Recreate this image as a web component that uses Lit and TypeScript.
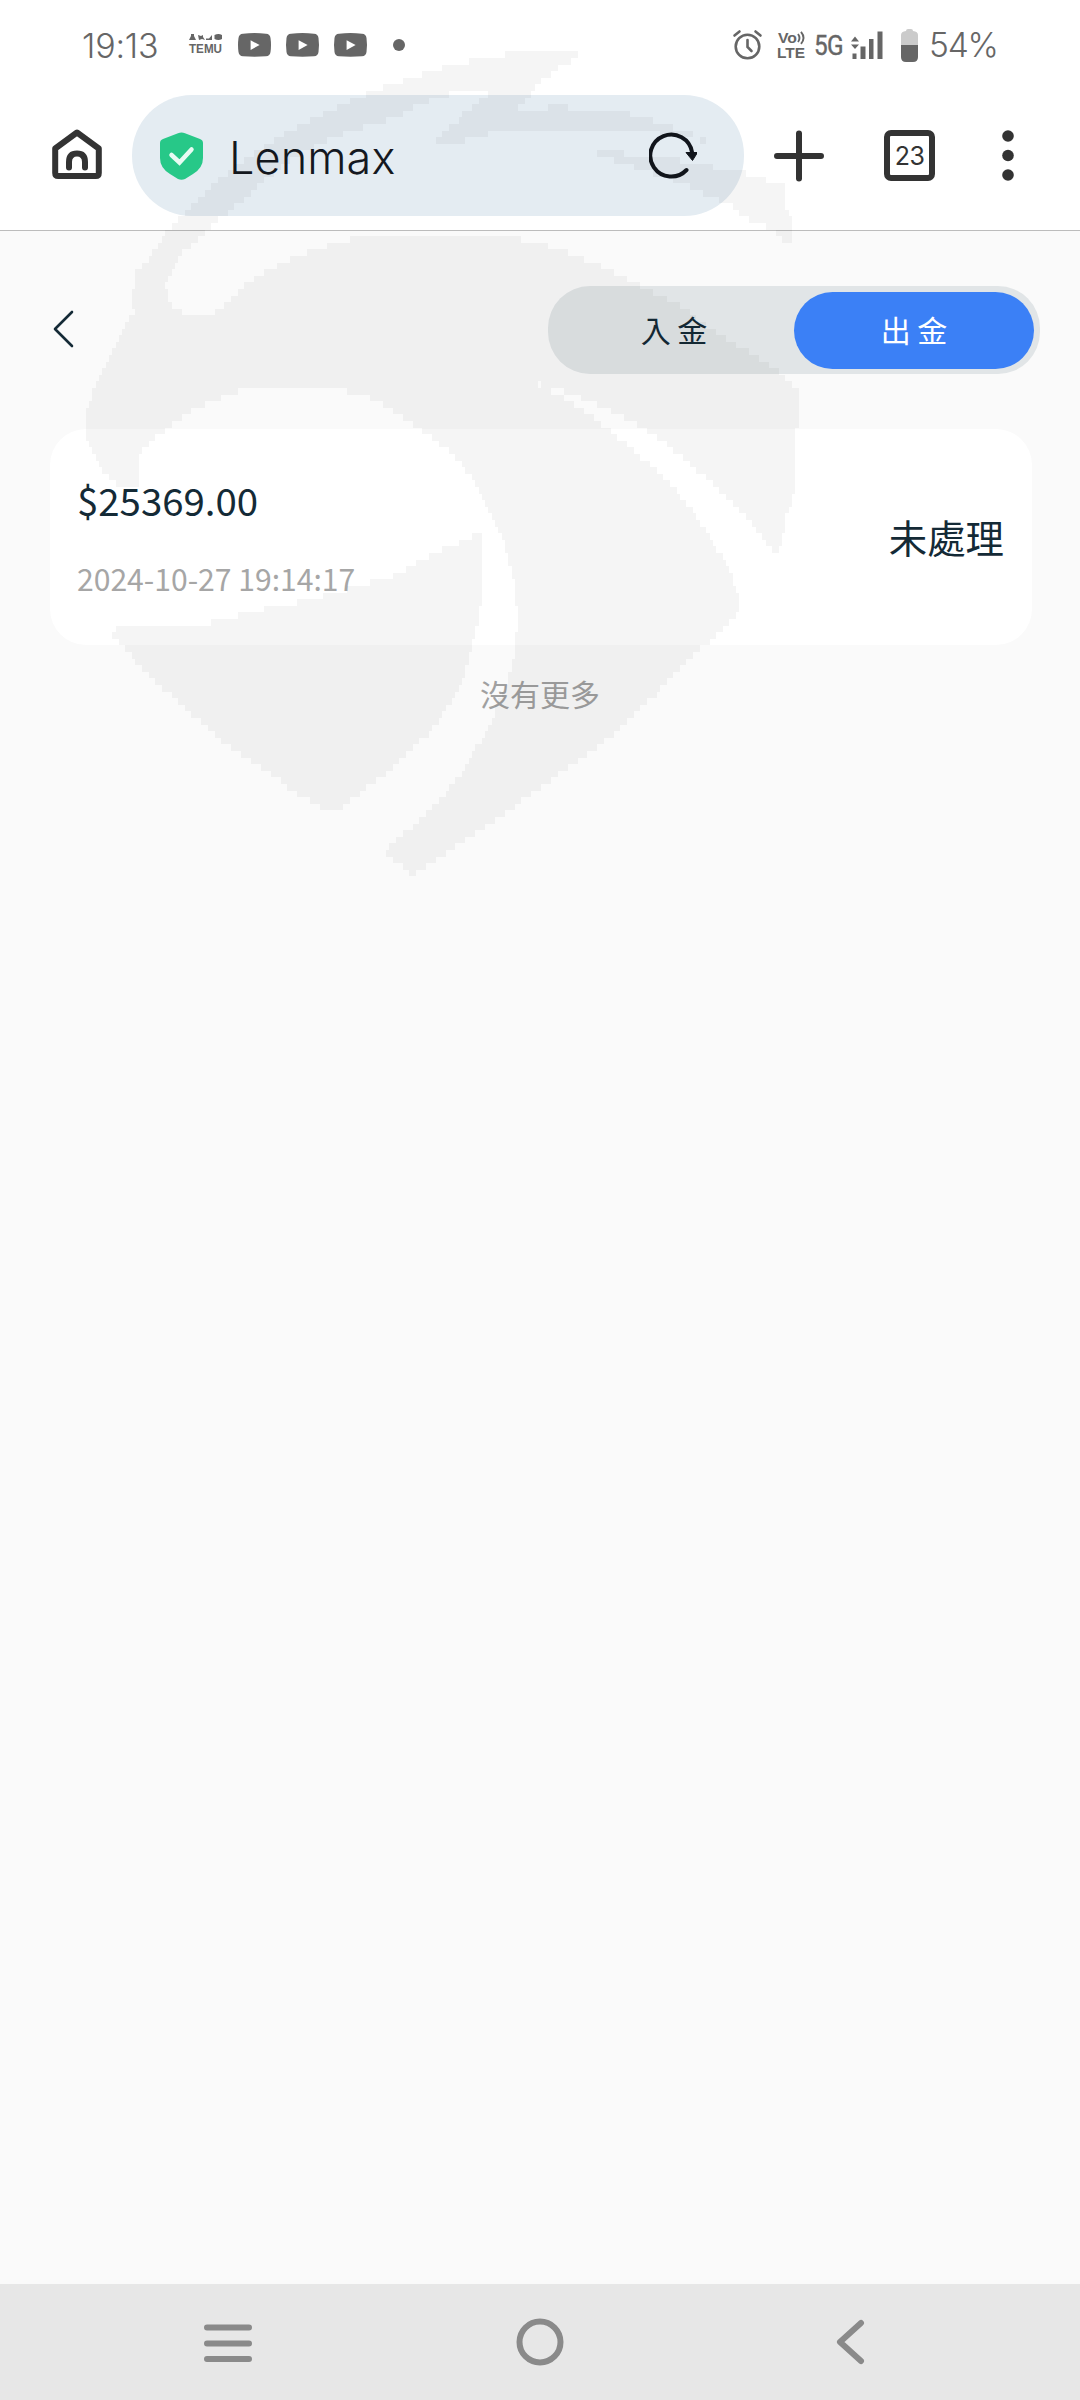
import { LitElement, html, css, svg } from "lit";
import { customElement, property } from "lit/decorators.js";

type Pt = [number, number];

// Emblem outlines in page pixels.
const HELMET: Pt[] = [
  [583, 51], [527, 51], [483, 58], [450, 65], [404, 80], [358, 97], [307, 122], [278, 138], [249, 156], [221, 178],
  [186, 213], [163, 236], [147, 262], [135, 274], [132, 302], [134, 312], [120, 335], [108, 357], [96, 385], [86, 415],
  [86, 435], [93, 455], [103, 471], [117, 485], [137, 484], [137, 457], [155, 438], [175, 422], [203, 405], [244, 389],
  [290, 386], [336, 388], [370, 398], [400, 415], [427, 433], [462, 463], [485, 502], [503, 540], [513, 575], [517, 610],
  [516, 646], [506, 685], [488, 729], [458, 779], [422, 818], [383, 851], [413, 876], [494, 821], [611, 737], [655, 695],
  [691, 657], [720, 632], [737, 613], [739, 600], [732, 575], [712, 540], [687, 503], [653, 467], [613, 433], [583, 410],
  [563, 397], [537, 384], [557, 388], [577, 396], [610, 410], [647, 430], [687, 460], [720, 492], [753, 525], [775, 555],
  [782, 540], [788, 510], [794, 495], [795, 437], [799, 420], [799, 390], [780, 373], [755, 356], [720, 335], [680, 306],
  [640, 285], [605, 268], [559, 249], [508, 236], [427, 233], [390, 233], [347, 240], [305, 253], [290, 260], [262, 273],
  [244, 285], [230, 300], [212, 314], [183, 314], [169, 302], [165, 285], [172, 268], [185, 250], [198, 240], [207, 230],
  [222, 216], [238, 205], [258, 185], [290, 160], [320, 143], [355, 130], [396, 118], [420, 103], [448, 97], [448, 92],
  [490, 92], [480, 100], [467, 110], [455, 123], [435, 141], [447, 145], [473, 138], [497, 132], [600, 131], [650, 132],
  [680, 137], [712, 143], [690, 133], [657, 122], [623, 112], [560, 107], [517, 109], [528, 97], [535, 87], [547, 77],
  [557, 68], [572, 60],
];
const PLUME: Pt[] = [
  [592, 152], [615, 152], [650, 158], [677, 160], [703, 166], [727, 168], [753, 175], [785, 187], [787, 207], [793, 225],
  [793, 240], [783, 240], [773, 230], [750, 220], [727, 203], [710, 197], [683, 183], [660, 175], [633, 167], [613, 160],
];
const JAW: Pt[] = [
  [482, 532], [483, 585], [476, 629], [462, 685], [433, 729], [393, 768], [333, 814], [301, 796], [221, 740], [152, 679],
  [112, 635], [117, 626], [203, 624], [261, 610], [310, 600], [358, 586], [395, 575], [427, 557],
];

const CELL = 6.6;
const ROW_OFFSET = 5.2;

// Converts an outline to one stepped path on a coarse cell grid.
function stepped(points: Pt[]): string {
  const ys = points.map((p) => p[1]);
  const first = Math.floor((Math.min(...ys) - ROW_OFFSET) / CELL);
  const last = Math.ceil((Math.max(...ys) - ROW_OFFSET) / CELL);
  let d = "";
  for (let r = first; r <= last; r++) {
    const top = r * CELL + ROW_OFFSET;
    const y = top + CELL / 2;
    const xs: number[] = [];
    points.forEach(([x1, y1], i) => {
      const [x2, y2] = points[(i + 1) % points.length];
      if (y1 <= y !== y2 <= y) xs.push(x1 + ((y - y1) * (x2 - x1)) / (y2 - y1));
    });
    xs.sort((a, b) => a - b);
    for (let i = 0; i + 1 < xs.length; i += 2) {
      const a = Math.round(xs[i] / 3.3) * 3.3;
      const b = Math.round(xs[i + 1] / 3.3) * 3.3;
      if (b > a) d += `M${a.toFixed(1)} ${top.toFixed(1)}H${b.toFixed(1)}v${CELL}H${a.toFixed(1)}z`;
    }
  }
  return d;
}

const EMBLEM = [HELMET, PLUME, JAW].map(stepped).join("");

@customElement("status-bar")
class StatusBar extends LitElement {
  static styles = css`
    :host { display: flex; justify-content: space-between; height: 95px; padding: 0 82px 0 82px; box-sizing: border-box;
      color: #666; font-family: Inter, Roboto, sans-serif; font-weight: 300; }
    .side { display: flex; height: 90px; align-items: center; }
    .time { font-size: 34px; letter-spacing: -0.2px; width: 107px; white-space: nowrap; }
    .pct { font-size: 33.500px; letter-spacing: -1.2px; width: 69px; margin-left: 11px; white-space: nowrap; }
    svg { display: block; fill: #666; overflow: visible; }
    .yt { margin-left: 15px; }
    .dot { margin-left: 26px; }
    .volte { margin-left: 15px; }
    .net { margin-left: 8px; font: 400 28px Roboto, sans-serif; width: 31px; letter-spacing: -0.8px; -webkit-text-stroke: 0.4px #666; transform: scaleX(0.87); transform-origin: 0 50%; }
    .signal { margin-left: 6px; }
    .battery { margin-left: 18px; }
    text { font-family: "Liberation Sans", sans-serif; font-weight: 700; }
  `;
  render() {
    const yt = html`<svg class="yt" width="33" height="24" viewBox="0 0 33 24"><path fill-rule="evenodd" d="M5 .8Q16.500-.8 28 .8 32 1 32.500 5q1 7 0 14-.5 4-4.500 4.300-11.500.8-23 0Q1 23 .5 19-.5 12 .5 5 1 1 5 .8M12.600 7.300v9.600l9-4.800z"/></svg>`;
    return html`
      <div class="side">
        <span class="time">19:13</span>
        <svg width="34" height="22" viewBox="0 0 34 22">
          <path d="M2 0h3v2l2 4H0l2-4zM9 1l3 1 2-1v2l2 3-3-1-3 1zM17 4.500h3l3-3.500v5h-6zM25.500 1q4-2 7.500 0v4q-3.500 2-7.500 0z"/>
          <text x="0" y="19" font-size="12" textLength="33" lengthAdjust="spacingAndGlyphs">TEMU</text>
        </svg>
        ${yt}${yt}${yt}
        <svg class="dot" width="12" height="12"><circle cx="6" cy="6" r="6"/></svg>
      </div>
      <div class="side">
        <svg width="29" height="30" viewBox="0 0 29 30">
          <g fill="none" stroke="#666" stroke-width="2.600" stroke-linecap="round">
            <circle cx="14.500" cy="16.500" r="11.800"/><path d="M14.500 10v7l4 4M1.500 5.500l5-4M27.500 5.500l-5-4"/>
          </g>
        </svg>
        <svg class="volte" width="29" height="28" viewBox="0 0 29 28">
          <text x="1" y="12" font-size="14" textLength="19" lengthAdjust="spacingAndGlyphs">Vo</text>
          <path d="M21 3q3 4 0 8M24 .8q5 6 0 12" fill="none" stroke="#666" stroke-width="1.900"/>
          <text x="0" y="27" font-size="15" textLength="28" lengthAdjust="spacingAndGlyphs">LTE</text>
        </svg>
        <span class="net">5G</span>
        <svg class="signal" width="32" height="28" viewBox="0 0 32 28">
          <path d="M4 5.500l4 5H0zM4 18l4-4.500H0zM1.500 22.500h4V28h-4zM9.500 15.500h5V28h-5zM18 8h4.500v20H18zM26.500 .5h5V28h-5z"/>
        </svg>
        <svg class="battery" width="17" height="33" viewBox="0 0 17 33">
          <path fill="#cbcbcb" d="M5 2q0-2 2-2h3q2 0 2 2 5 .5 5 4v10H0V6q0-3.500 5-4z"/>
          <path d="M0 16h17v12q0 5-5 5H5q-5 0-5-5z"/>
        </svg>
        <span class="pct">54%</span>
      </div>`;
  }
}

@customElement("browser-bar")
class BrowserBar extends LitElement {
  @property() title = "";
  @property({ type: Number }) tabs = 0;
  static styles = css`
    :host { display: flex; height: 136px; box-sizing: border-box; border-bottom: 1.500px solid #bcbcbc; padding: 0 64px 0 52px; font-family: Inter, Roboto, sans-serif; }
    svg { display: block; flex: none; }
    .home { margin: 33px 30px 0 0; }
    .address { display: flex; align-items: center; width: 612px; height: 121px; box-sizing: border-box; border-radius: 60px; background: #e4ecf2; padding: 0 47px 0 28px; }
    .title { flex: 1; padding: 3px 0 0 26px; font-size: 45px; font-weight: 300; letter-spacing: 0.1px; color: #14181f; }
    .add { margin: 35px 0 0 30px; }
    .tabs { margin: 35px 0 0 60px; width: 51px; height: 51px; box-sizing: border-box; border: 6.500px solid #333; border-radius: 7px;
      display: flex; align-items: center; justify-content: center; font-size: 25px; letter-spacing: -0.5px; color: #333; }
    .more { margin: 35px 0 0 67px; }
  `;
  render() {
    return html`
      <svg class="home" width="50" height="54" viewBox="0 0 50 54" fill="none" stroke="#333" stroke-width="6" stroke-linecap="round" stroke-linejoin="round">
        <path d="M25 4.500L3.200 20.500V45q0 3 3 3h37.600q3 0 3-3V20.500z"/>
        <path d="M17 39.500V34q0-8.500 8-8.500t8 8.500v5.500"/>
      </svg>
      <div class="address">
        <svg width="43" height="48" viewBox="0 0 43 48">
          <path fill="#27c888" d="M18 1.200q3.500-1.600 7 0L40 7q3 1.200 3 4v15q0 10-10 16l-8 5q-3.500 1.600-7 0l-8-5Q0 36 0 26V11q0-2.800 3-4z"/>
          <path d="M11.500 23l8 7.500 12-13" fill="none" stroke="#e8fbf3" stroke-width="4.500" stroke-linecap="round"/>
        </svg>
        <span class="title">${this.title}</span>
        <svg width="48" height="48" viewBox="0 0 48 48">
          <path d="M37.500 38A21 21 0 1 1 43 20" fill="none" stroke="#11151c" stroke-width="4" stroke-linecap="round"/>
          <path d="M37 20.500h11.500L43.500 28.500z" fill="#11151c" stroke="#11151c" stroke-width="1" stroke-linejoin="round"/>
        </svg>
      </div>
      <svg class="add" width="50" height="52" viewBox="0 0 50 52"><path d="M25 3.500v45M3 26h44" stroke="#333" stroke-width="6" stroke-linecap="round"/></svg>
      <div class="tabs">${this.tabs}</div>
      <svg class="more" width="12" height="52" viewBox="0 0 12 52" fill="#333"><circle cx="6" cy="6" r="5.800"/><circle cx="6" cy="25.500" r="5.800"/><circle cx="6" cy="45" r="5.800"/></svg>`;
  }
}

@customElement("nav-bar")
class NavBar extends LitElement {
  static styles = css`
    :host { display: grid; grid-template-columns: 312px 1fr 312px; align-items: center; height: 116px; box-sizing: border-box; padding: 0 72px; background: #e7e7e7; }
    svg { display: block; justify-self: center; fill: none; stroke: #8a8a8a; stroke-width: 6; stroke-linecap: round; stroke-linejoin: round; }
    .back { margin-left: -4px; }
  `;
  render() {
    return html`
      <svg width="48" height="40" viewBox="0 0 48 40"><path d="M3 5.500h42M3 21.500h42M3 37h42"/></svg>
      <svg width="48" height="48" viewBox="0 0 48 48"><circle cx="24" cy="24" r="20.500"/></svg>
      <svg class="back" width="29" height="46" viewBox="0 0 29 46"><path d="M25 4L4 23l21 19"/></svg>`;
  }
}

@customElement("app-root")
class AppRoot extends LitElement {
  static styles = css`
    :host { display: flex; flex-direction: column; position: relative; width: 1080px; height: 2400px; overflow: hidden; background: #fff;
      color: #142a36; font-family: "Noto Sans CJK TC", "Noto Sans", sans-serif; }
    .page { flex: 1; background: #fafafa; }
    .head { display: flex; justify-content: space-between; align-items: flex-start; padding: 55px 40px 0 52px; height: 198px; box-sizing: border-box; }
    .back { display: block; margin-top: 24px; fill: none; stroke: #142a36; stroke-width: 2.600; stroke-linecap: round; stroke-linejoin: round; }
    .segments { display: flex; width: 492px; height: 88px; box-sizing: border-box; padding: 6px; border-radius: 42px; background: #e1e5e7; }
    .segment { flex: 1; display: flex; align-items: center; justify-content: center; border-radius: 38.500px; height: 77px; box-sizing: border-box; padding-bottom: 3px; font-size: 30px; line-height: 1; }
    .active { background: #3b80f6; color: #fff; }
    .card { display: flex; justify-content: space-between; align-items: center; margin: 0 48px 0 50px; height: 216px; box-sizing: border-box; padding: 0 28px 0 27px; border-radius: 36px; background: #fff; }
    .amount { font-size: 38.400px; line-height: 50px; }
    .date { margin-top: 32px; font-size: 30.100px; line-height: 44px; color: #a6a6a6; }
    .state { font-size: 38.400px; line-height: 50px; padding-bottom: 2px; }
    .end { margin-top: 26px; text-align: center; font-size: 30px; line-height: 44px; color: #a0a0a0; }
    .emblem { position: absolute; left: 0; top: 0; pointer-events: none; }
  `;
  render() {
    return html`
      <status-bar></status-bar>
      <browser-bar title="Lenmax" tabs="23"></browser-bar>
      <main class="page">
        <div class="head">
          <svg class="back" width="24" height="38" viewBox="0 0 24 38"><path d="M20 2L3 19l17 17"/></svg>
          <div class="segments">
            <div class="segment">入 金</div>
            <div class="segment active">出 金</div>
          </div>
        </div>
        <div class="card">
          <div>
            <div class="amount">$25369.00</div>
            <div class="date">2024-10-27 19:14:17</div>
          </div>
          <div class="state">未處理</div>
        </div>
        <div class="end">沒有更多</div>
      </main>
      <nav-bar></nav-bar>
      <svg class="emblem" width="1080" height="900" viewBox="0 0 1080 900">${svg`<path d=${EMBLEM} fill="#000" fill-opacity="0.04" shape-rendering="crispEdges"/>`}</svg>`;
  }
}
